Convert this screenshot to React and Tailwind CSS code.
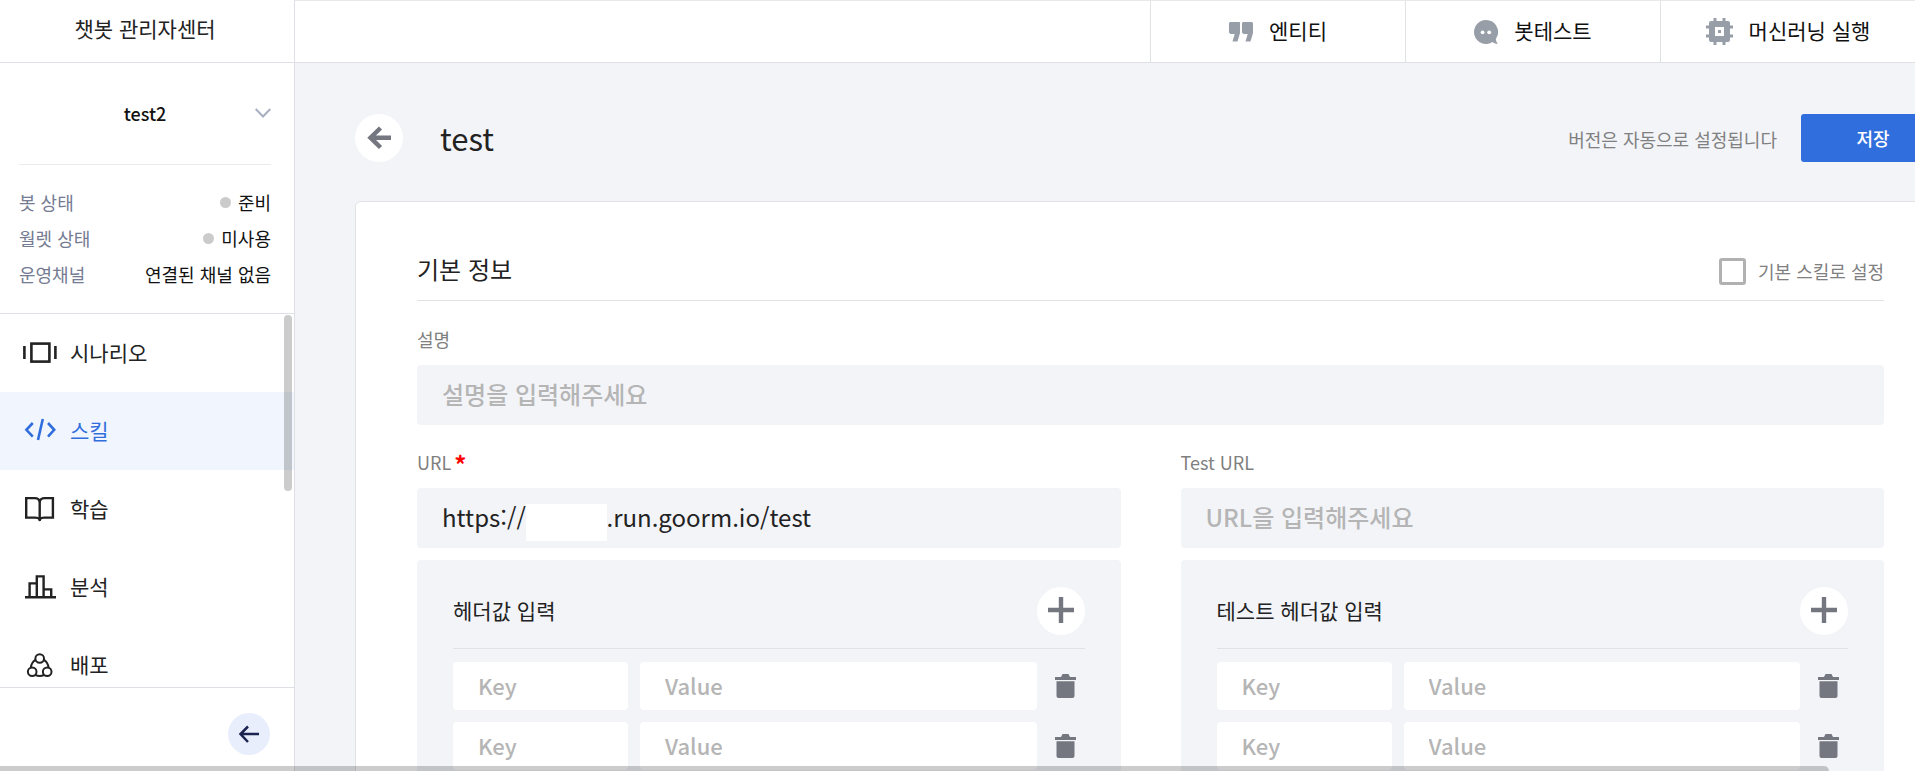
import React, { useState } from 'react';

function ScenarioIcon() {
    return (
        <svg viewBox="0 0 36 36" className="w-9 h-9 shrink-0" fill="none" stroke="currentColor" strokeWidth="2.6">
            <path d="M2.4 11v13M33.4 11v13" />
            <rect x="9.4" y="8.6" width="18" height="18" />
        </svg>
    );
}

function SkillIcon() {
    return (
        <svg viewBox="0 0 36 36" className="w-9 h-9 shrink-0" fill="none" stroke="currentColor" strokeWidth="2.6">
            <path d="M10.8 10 4.4 16.8l6.4 6.8M26 10l6.2 6.8L26 23.6M20.8 6 16 27" />
        </svg>
    );
}

function BookIcon() {
    return (
        <svg viewBox="0 0 36 36" className="w-9 h-9 shrink-0" fill="none" stroke="currentColor" strokeWidth="2.4">
            <path d="M17.7 10c-1-2.2-2.4-2.9-4.6-2.9H4.2v19.5h8.9c2.4 0 3.6.4 4.6 1.800 1-1.400 2.200-1.800 4.600-1.800h8.600V7.100h-8.600c-2.200 0-3.600.7-4.600 2.900z" />
            <path d="M17.7 9.5V30" />
        </svg>
    );
}

function ChartIcon() {
    return (
        <svg viewBox="0 0 36 36" className="w-9 h-9 shrink-0" fill="none" stroke="currentColor" strokeWidth="2.4">
            <path d="M3 28.3h31M7.6 28V14.4h7M14.8 28V7.4h6.8V28M21.6 20.4h7.6V28" />
        </svg>
    );
}

function DeployIcon() {
    return (
        <svg viewBox="0 0 36 36" className="w-9 h-9 shrink-0" fill="none" stroke="currentColor" strokeWidth="2">
            <circle cx="17.7" cy="11.5" r="4.3" />
            <circle cx="10.2" cy="24.8" r="4.3" />
            <circle cx="25.2" cy="24.8" r="4.3" />
            <path d="M13.6 12.6c-2.8 1.9-4.4 4.6-4.8 8M21.8 12.6c2.8 1.9 4.4 4.6 4.8 8M13.4 28c2.9 1.3 5.7 1.3 8.6 0" />
        </svg>
    );
}

function QuoteIcon() {
    return (
        <svg viewBox="0 0 24 20" className="w-6 h-5" fill="currentColor">
            <path d="M1 0h9.500L11 .5V11L8.500 19.500H3.500L5.700 12H1.500L0 10.500V1zM14 0h9l1 1v10l-2.500 8.500h-5L18.700 12h-4.200L13 10.500V1z" />
        </svg>
    );
}

function BotIcon() {
    return (
        <svg viewBox="0 0 24 24" className="w-6 h-6">
            <path fill="currentColor" d="M12 0a12 12 0 1 0 6.500 22.100c1.600 1.300 3.400 1.900 5.500 1.700-1.200-1.200-1.900-2.800-2.200-4.900A12 12 0 0 0 12 0z" />
            <circle cx="8.6" cy="12.3" r="1.9" fill="#fff" />
            <circle cx="15.2" cy="12.3" r="1.9" fill="#fff" />
        </svg>
    );
}

function ChipIcon() {
    return (
        <svg viewBox="0 0 27 27" className="w-[27px] h-[27px]" fill="currentColor">
            <path fillRule="evenodd" d="M5 3h17a2 2 0 0 1 2 2v17a2 2 0 0 1-2 2H5a2 2 0 0 1-2-2V5a2 2 0 0 1 2-2zm4 6v9h9V9z" />
            <path d="M7.5 0h3v3h-3zM16.5 0h3v3h-3zM7.5 24h3v3h-3zM16.5 24h3v3h-3zM0 7.5h3v3H0zM0 16.5h3v3H0zM24 7.5h3v3h-3zM24 16.5h3v3h-3zM12 12h3v3h-3z" />
        </svg>
    );
}

function TrashIcon() {
    return (
        <svg viewBox="0 0 21 24" className="w-[21px] h-6" fill="#757780">
            <path d="M0 3h6l1.500-3h6L15 3h6v3H0zM1.500 7.300h18V22a2 2 0 0 1-2 2h-14a2 2 0 0 1-2-2z" />
        </svg>
    );
}

const topMenu = [
    { label: '엔티티', icon: QuoteIcon },
    { label: '봇테스트', icon: BotIcon },
    { label: '머신러닝 실행', icon: ChipIcon },
];

const navItems = [
    { label: '시나리오', icon: ScenarioIcon },
    { label: '스킬', icon: SkillIcon },
    { label: '학습', icon: BookIcon },
    { label: '분석', icon: ChartIcon },
    { label: '배포', icon: DeployIcon },
];

const statuses = [
    { label: '봇 상태', value: '준비', dot: true },
    { label: '월렛 상태', value: '미사용', dot: true },
    { label: '운영채널', value: '연결된 채널 없음', dot: false },
];

// the host name is masked, so only its width is kept
const MASKED_HOST = '\u00a0'.repeat(12);

function Sidebar() {
    const [active, setActive] = useState('스킬');

    return (
        <aside className="w-[295px] shrink-0 flex flex-col bg-white border-r border-[#dfe0e6]">
            <div className="h-[63px] shrink-0 flex items-center justify-center pb-1 pr-1 border-b border-[#dfe0e6] text-[21px] text-[#222]">
                챗봇 관리자센터
            </div>

            {/* Bot selector */}
            <div className="shrink-0 pl-[19px] pr-[23px]">
                <button className="w-full h-[102px] grid grid-cols-[16px_1fr_16px] items-center pb-0.5 border-b border-[#ebebeb] text-lg font-medium text-[#111]">
                    <span />
                    <span>test2</span>
                    <svg viewBox="0 0 16 10" className="w-4 h-2.5" fill="none" stroke="#a9aec0" strokeWidth="2">
                        <path d="M.7 1 8 8.5 15.3 1" />
                    </svg>
                </button>
            </div>

            {/* Status */}
            <dl className="shrink-0 pl-[19px] pr-[23px] pt-[19px] pb-[21px] border-b border-[#dfe0e6] text-lg leading-9">
                {statuses.map((status) => (
                    <div key={status.label} className="flex items-center justify-between">
                        <dt className="text-[#747b92]">{status.label}</dt>
                        <dd className="flex items-center gap-[7px] text-[#111]">
                            {status.dot && <span className="w-[11px] h-[11px] rounded-full bg-[#cbcbcb]" />}
                            {status.value}
                        </dd>
                    </div>
                ))}
            </dl>

            {/* Menu */}
            <nav className="relative flex-1 min-h-0 overflow-hidden">
                {navItems.map((item) => {
                    const Icon = item.icon;
                    const selected = item.label === active;
                    return (
                        <a
                            key={item.label}
                            href="#"
                            onClick={() => setActive(item.label)}
                            className={`h-[78px] pl-[22px] flex items-center gap-3 text-[21px] ${selected ? 'bg-[#f1f6fe] text-[#316edd]' : 'text-[#222]'}`}
                        >
                            <Icon />
                            <span>{item.label}</span>
                        </a>
                    );
                })}
                <div className="absolute top-px right-0.5 w-2 h-44 rounded-full bg-black/20" />
            </nav>

            <div className="h-[84px] shrink-0 flex items-start justify-end pt-[25px] pr-6 border-t border-[#dfe0e6]">
                <button aria-label="메뉴 접기" className="w-[42px] h-[42px] rounded-full bg-[#e8eefb]">
                    <svg viewBox="0 0 42 42" className="w-full h-full" fill="none" stroke="#1b2350" strokeWidth="2.5">
                        <path d="M20 13.500 12.500 21l7.500 8M12.500 21H31" />
                    </svg>
                </button>
            </div>
        </aside>
    );
}

function HeaderValues({ title }) {
    return (
        <section className="mt-3 px-9 pt-[27px] pb-9 rounded bg-[#f3f4f8]">
            <div className="flex items-center justify-between pb-[13px] border-b border-[#e1e2e4]">
                <h3 className="text-[21px] text-[#222]">{title}</h3>
                <button aria-label={`${title} 추가`} className="w-12 h-12 rounded-full bg-white">
                    <svg viewBox="0 0 48 48" className="w-full h-full" fill="none" stroke="#757780" strokeWidth="4.4">
                        <path d="M24 10v26M11 23h26" />
                    </svg>
                </button>
            </div>
            <div className="mt-[13px] flex flex-col gap-3">
                {[1, 2, 3].map((row) => (
                    <div key={row} className="flex items-center">
                        <input
                            aria-label={`${title} Key ${row}`}
                            placeholder="Key"
                            className="w-[175px] h-12 mr-3 px-[25px] pb-0.5 rounded bg-white text-[22px] font-medium text-[#222] placeholder:text-[#b5b5b5]"
                        />
                        <input
                            aria-label={`${title} Value ${row}`}
                            placeholder="Value"
                            className="flex-1 min-w-0 h-12 px-[25px] pb-0.5 rounded bg-white text-[22px] font-medium text-[#222] placeholder:text-[#b5b5b5]"
                        />
                        <button aria-label={`${title} 삭제 ${row}`} className="w-12 h-12 flex items-center justify-end pr-[9px]">
                            <TrashIcon />
                        </button>
                    </div>
                ))}
            </div>
        </section>
    );
}

export default function App() {
    const [url, setUrl] = useState(`https://${MASKED_HOST}.run.goorm.io/test`);

    return (
        <div lang="ko" className="relative h-screen flex overflow-hidden bg-[#f3f4f8] font-['Noto_Sans_CJK_KR','Noto_Sans',sans-serif]">
            <Sidebar />

            <div className="flex-1 min-w-0 flex flex-col">
                <header className="h-[63px] shrink-0 flex justify-end bg-white border-t border-b border-t-[#e8e8e8] border-b-[#dfe0e6]">
                    {topMenu.map((item) => {
                        const Icon = item.icon;
                        return (
                            <button key={item.label} className="w-[255px] flex items-center justify-center gap-4 border-l border-[#e1e2e4] text-[21px] text-[#111]">
                                <span className="text-[#979ea7]"><Icon /></span>
                                <span className="pb-0.5">{item.label}</span>
                            </button>
                        );
                    })}
                </header>

                <main className="flex-1 min-h-0 overflow-hidden">
                    <div className="min-w-[1710px] px-[60px] pt-[51px]">
                        {/* Title bar */}
                        <div className="flex items-center">
                            <button aria-label="뒤로" className="w-12 h-12 shrink-0 rounded-full bg-white">
                                <svg viewBox="0 0 48 48" className="w-full h-full" fill="none" stroke="#757780" strokeWidth="4.5">
                                    <path d="M25.500 14 15.500 23.700l10 9.800M15 23.700h21" />
                                </svg>
                            </button>
                            <h1 className="ml-[37px] text-[31px] leading-10 text-[#222]">test</h1>
                            <span className="ml-auto mr-6 pt-0.5 text-lg text-[#808080]">버전은 자동으로 설정됩니다</span>
                            <button className="w-36 h-12 rounded-[3px] bg-[#316edd] text-lg font-medium text-white">저장</button>
                        </div>

                        <div className="mt-[39px] pl-[61px] pr-[60px] pt-[50px] pb-[60px] rounded-md bg-white border border-[#e1e2e4]">
                            <div className="h-[49px] flex items-center justify-between border-b border-[#e1e2e4]">
                                <h2 className="pb-3.5 text-2xl text-[#222]">기본 정보</h2>
                                <label className="flex items-center gap-3 pb-2.5 text-lg text-[#808080]">
                                    <input type="checkbox" className="appearance-none w-[27px] h-[27px] rounded-[3px] border-3 border-[#b1b1b1] bg-white checked:bg-[#316edd]" />
                                    기본 스킬로 설정
                                </label>
                            </div>

                            <label htmlFor="description" className="block mt-6 mb-3 text-lg leading-7 text-[#808080]">설명</label>
                            <input
                                id="description"
                                placeholder="설명을 입력해주세요"
                                className="w-full h-[60px] px-[25px] pb-1 rounded bg-[#f3f4f8] text-2xl font-medium text-[#222] placeholder:text-[#b5b5b5]"
                            />

                            <div className="mt-[23px] grid grid-cols-2 gap-[60px]">
                                <div>
                                    <label htmlFor="url" className="flex gap-[3px] mb-3 text-lg leading-7 text-[#808080]">
                                        URL<span className="h-7 font-bold text-2xl leading-8 text-[#f00]">*</span>
                                    </label>
                                    <div className="relative">
                                        <input
                                            id="url"
                                            value={url}
                                            onChange={(e) => setUrl(e.target.value)}
                                            className="w-full h-[60px] px-[25px] pb-1 rounded bg-[#f3f4f8] text-2xl text-[#222]"
                                        />
                                        <div className="absolute left-[109px] top-4 w-[81px] h-[37px] bg-white" />
                                    </div>
                                    <HeaderValues title="헤더값 입력" />
                                </div>
                                <div>
                                    <label htmlFor="test-url" className="block mb-3 text-lg leading-7 text-[#808080]">Test URL</label>
                                    <input
                                        id="test-url"
                                        placeholder="URL을 입력해주세요"
                                        className="w-full h-[60px] px-[25px] pb-1 rounded bg-[#f3f4f8] text-2xl font-medium text-[#222] placeholder:text-[#b5b5b5]"
                                    />
                                    <HeaderValues title="테스트 헤더값 입력" />
                                </div>
                            </div>
                        </div>
                    </div>
                </main>
            </div>

            {/* Horizontal scroll thumb */}
            <div className="absolute left-0 bottom-0 w-[95.5%] h-[5px] rounded-tr-md bg-black/20" />
        </div>
    );
}
